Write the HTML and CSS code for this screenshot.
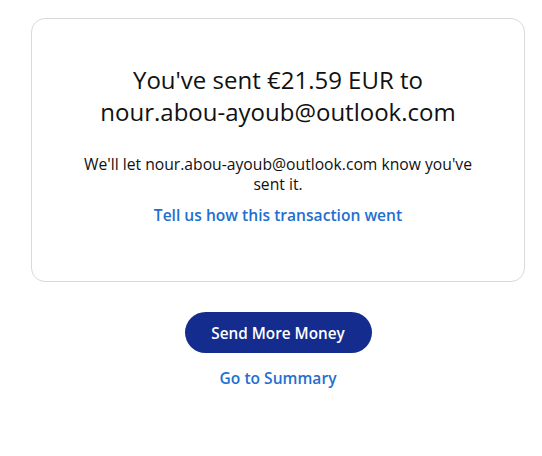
FILE: index.html
```html
<!DOCTYPE html>
<html lang="en">
<head>
<meta charset="utf-8">
<link rel="stylesheet" href="styles.css">
</head>
<body>
<main class="page">
  <section class="card">
    <h1 class="title">You've sent €21.59 EUR to<br>nour.abou-ayoub@outlook.com</h1>
    <p class="note">We'll let nour.abou-ayoub@outlook.com know you've sent it.</p>
    <a class="link feedback" href="#">Tell us how this transaction went</a>
  </section>
  <div class="actions">
    <button class="primary">Send More Money</button>
    <a class="link summary" href="#">Go to Summary</a>
  </div>
</main>
</body>
</html>
```

FILE: styles.css
```css
html, body {
  margin: 0;
  padding: 0;
  background: #ffffff;
}
body {
  font-family: "Open Sans", "Noto Sans", sans-serif;
  color: #111111;
}
.page {
  width: 494px;
  margin-left: 31px;
  padding-top: 18px;
  display: flex;
  flex-direction: column;
  align-items: center;
}
.card {
  box-sizing: border-box;
  width: 494px;
  height: 264px;
  border: 1px solid #d9d9d9;
  border-radius: 14px;
  display: flex;
  flex-direction: column;
  align-items: center;
  padding: 45px 40px 0;
  text-align: center;
}
.title {
  margin: 0;
  font-size: 24px;
  font-weight: 400;
  line-height: 32px;
  color: #111111;
}
.note {
  margin: 26px 0 0;
  width: 410px;
  font-size: 15.7px;
  line-height: 20px;
}
.link {
  color: #1f6fd1;
  font-weight: 600;
  font-size: 15.6px;
  text-decoration: none;
}
.feedback {
  margin-top: 11px;
  line-height: 20px;
}
.actions {
  margin-top: 30px;
  display: flex;
  flex-direction: column;
  align-items: center;
}
.primary {
  width: 187px;
  height: 41px;
  border: none;
  border-radius: 21px;
  background: #142c8e;
  color: #ffffff;
  font-family: inherit;
  font-size: 15.3px;
  font-weight: 600;
}
.summary {
  margin-top: 15px;
  line-height: 20px;
}
```
